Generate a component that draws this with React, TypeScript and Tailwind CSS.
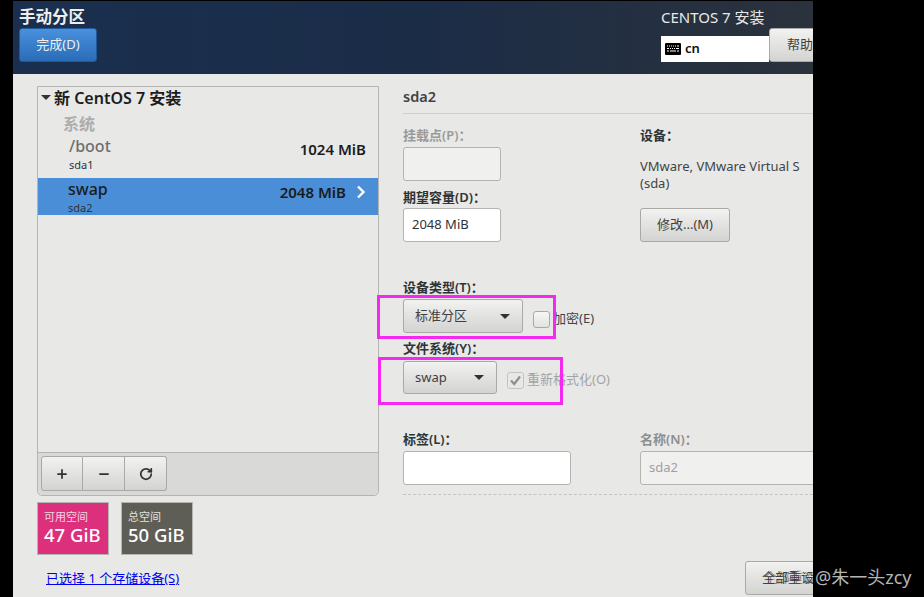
import { Plus, Minus, RotateCw } from "lucide-react"

const font = "font-['Noto_Sans','Noto_Sans_CJK_SC',sans-serif]"
const btn =
    "flex items-center rounded-[3px] border border-[#a9a9a6] bg-gradient-to-b from-[#f2f2f1] to-[#d3d3d1] text-[#3f3f3f]"
const label = "text-[13px] leading-[16px] font-semibold whitespace-nowrap"

function Caret() {
    return <span className="w-0 h-0 border-x-[5px] border-x-transparent border-t-[5px] border-t-[#2e3436]" />
}

function Keyboard() {
    return (
        <svg width="16" height="12" viewBox="0 0 16 12" className="shrink-0">
            <rect width="16" height="12" rx="1" fill="#000" />
            <path d="M2 3h1M4 3h1M6 3h1M8 3h1M10 3h1M12 3h2M2 5.500h2M5 5.500h1M7 5.500h1M9 5.500h1M11 5.500h3M2 8h2M5 8h6M12 8h2" stroke="#fff" strokeWidth="1" />
        </svg>
    )
}

function PartRow({ name, dev, size, selected }: { name: string; dev: string; size: string; selected?: boolean }) {
    return (
        <div className={selected ? "h-[37px] bg-[#4a8ed8] flex pl-[30px] pr-[12px]" : "h-[37px] flex pl-[31px] pr-[12px]"}>
            <div className="flex-1 flex flex-col">
                <span className={selected ? "text-[16px] leading-[22px] font-medium text-[#1c1c1c]" : "text-[16px] leading-[22px] font-medium text-[#6e6e6e]"}>{name}</span>
                <span className="text-[11px] leading-[13px] mt-[1px] text-[#2e3436]">{dev}</span>
            </div>
            <span className="text-[15px] font-semibold text-[#1c1c1c] mt-[6px] leading-[17px]">{size}</span>
            {selected ? (
                <svg width="10" height="14" viewBox="0 0 10 14" className="ml-[10px] mt-[7px]">
                    <path d="M2 1.500 7.500 7 2 12.500" fill="none" stroke="#fff" strokeWidth="2.400" />
                </svg>
            ) : null}
        </div>
    )
}

export default function App() {
    return (
        <div className={`relative w-[924px] h-[597px] bg-black overflow-hidden pl-[13px] pt-px ${font}`}>
            <div className="w-[800px] h-[596px] bg-[#e8e8e7] flex flex-col overflow-hidden">
                {/* Header */}
                <header className="h-[73px] shrink-0 flex justify-between bg-gradient-to-r from-[#1a2f4f] via-[#1b2c47] to-[#2a323c]">
                    <div className="pl-[6px] pt-[6px]">
                        <h1 className="text-[16.500px] leading-[20px] font-semibold text-[#eeeeec]">手动分区</h1>
                        <button className="mt-[1px] w-[78px] h-[34px] rounded-[3px] border border-[#1f5a9c] bg-gradient-to-b from-[#4a90dc] to-[#2a6cb8] text-[13px] text-[#eeeeec]">
                            完成(D)
                        </button>
                    </div>
                    <div className="w-[152px] shrink-0 pt-[7px]">
                        <div className="text-[15px] leading-[18px] text-[#e8e8e8] whitespace-nowrap">CENTOS 7 安装</div>
                        <div className="flex items-start">
                            <div className="mt-[10px] w-[108px] h-[26px] shrink-0 bg-white flex items-center gap-[4px] pl-[4px]">
                                <Keyboard />
                                <span className="text-[13px] font-semibold text-[#111]">cn</span>
                            </div>
                            <button className={`${btn} mt-[2px] w-[60px] h-[34px] text-[13px] shrink-0 pl-[17px] whitespace-nowrap`}>帮助(H)</button>
                        </div>
                    </div>
                </header>

                <div className="flex-1 flex pl-[24px] pt-[12px] min-h-0">
                    {/* Left column */}
                    <div className="w-[342px] shrink-0">
                        <div className="h-[410px] border border-[#b4b4b2] rounded-b-[5px] flex flex-col">
                            <div className="flex-1">
                                <div className="flex items-center h-[21px] pl-[3px] gap-[3px] text-[16px] font-semibold text-[#1c1c1c]">
                                    <Caret />
                                    新 CentOS 7 安装
                                </div>
                                <div className="pl-[25px] text-[16px] leading-[20px] mt-[6px] font-semibold text-[#adadad]">系统</div>
                                <div className="mt-[1px] mb-[6px]"><PartRow name="/boot" dev="sda1" size="1024 MiB" /></div>
                                <PartRow name="swap" dev="sda2" size="2048 MiB" selected />
                            </div>
                            <div className="h-[43px] border-t border-[#b4b4b2] bg-[#d9d9d7] rounded-b-[5px] pl-[3px] pt-[3px]">
                                <div className="flex w-[126px] h-[35px]">
                                    <button className={`${btn} justify-center w-[42px] rounded-r-none`}><Plus size={14} strokeWidth={3} color="#2e3436" /></button>
                                    <button className={`${btn} justify-center w-[42px] rounded-none border-l-0`}><Minus size={14} strokeWidth={3} color="#2e3436" /></button>
                                    <button className={`${btn} justify-center w-[42px] rounded-l-none border-l-0`}><RotateCw size={14} strokeWidth={3} color="#2e3436" /></button>
                                </div>
                            </div>
                        </div>
                        <div className="flex gap-[12px] mt-[6px]">
                            <div className="w-[72px] h-[53px] border border-[#b4b4b2] bg-[#dc307c] text-white pl-[6px] pt-[7px]">
                                <div className="text-[11px] leading-[14px] text-[#f5d5e3]">可用空间</div>
                                <div className="text-[18.500px] leading-[22px] font-medium whitespace-nowrap">47 GiB</div>
                            </div>
                            <div className="w-[72px] h-[53px] border border-[#b4b4b2] bg-[#5e5e56] text-white pl-[6px] pt-[7px]">
                                <div className="text-[11px] leading-[14px] text-[#e2e2de]">总空间</div>
                                <div className="text-[18.500px] leading-[22px] font-medium whitespace-nowrap">50 GiB</div>
                            </div>
                        </div>
                        <a className="block ml-[9px] mt-[15px] text-[13px] leading-[16px] text-[#0000ee] underline whitespace-nowrap">已选择 1 个存储设备(S)</a>
                    </div>

                    {/* Right column */}
                    <div className="ml-[24px] flex-1 min-w-0">
                        <div className="h-[28px] border-b border-[#d0d0ce] text-[14.500px] font-semibold leading-[21px] text-[#3f4446]">sda2</div>
                        <div className="flex mt-[13px]">
                            <div className="w-[237px] shrink-0">
                                <div className={`${label} text-[#9a9a9a]`}>挂载点(P)：</div>
                                <div className="mt-[4px] w-[98px] h-[34px] border border-[#b4b4b2] rounded-[3px] bg-[#f0f0ef]" />
                                <div className={`${label} mt-[8px] text-[#2e3436]`}>期望容量(D)：</div>
                                <div className="mt-[3px] w-[98px] h-[34px] border border-[#b4b4b2] rounded-[3px] bg-white text-[13px] leading-[30px] pl-[8px] text-[#2e3436]">2048 MiB</div>
                            </div>
                            <div className="flex-1">
                                <div className={`${label} text-[#2e3436]`}>设备：</div>
                                <div className="mt-[15px] text-[13px] leading-[17px] text-[#3f4446] whitespace-nowrap">VMware, VMware Virtual S<br />(sda)</div>
                                <button className={`${btn} justify-center mt-[16px] w-[90px] h-[34px] text-[13px]`}>修改...(M)</button>
                            </div>
                        </div>

                        <div className={`${label} mt-[37px] text-[#2e3436]`}>设备类型(T)：</div>
                        <div className="flex items-center mt-[4px]">
                            <button className={`${btn} justify-between w-[120px] h-[34px] text-[13px] pl-[11px] pr-[12px]`}>标准分区<Caret /></button>
                            <span className="ml-[10px] w-[17px] h-[17px] rounded-[3px] border border-[#a9a9a6] bg-gradient-to-b from-[#f7f7f6] to-[#e2e2e0] mt-[6px]" />
                            <span className="ml-[3px] text-[13px] text-[#3f4446] mt-[6px]">加密(E)</span>
                        </div>
                        <div className={`${label} mt-[7px] text-[#2e3436]`}>文件系统(Y)：</div>
                        <div className="flex items-center mt-[5px]">
                            <button className={`${btn} justify-between w-[94px] h-[33px] text-[13px] pl-[11px] pr-[12px]`}>swap<Caret /></button>
                            <span className="ml-[10px] w-[17px] h-[17px] rounded-[3px] border border-[#c4c4c2] bg-[#e8e8e7] flex items-center justify-center mt-[5px]">
                                <svg width="13" height="13" viewBox="0 0 13 13"><path d="M2 6.500 5.200 10 11 2.500" fill="none" stroke="#8f8f8f" strokeWidth="2.200" /></svg>
                            </span>
                            <span className="ml-[3px] text-[13px] text-[#a3a3a3] mt-[5px]">重新格式化(O)</span>
                        </div>

                        <div className="flex mt-[37px]">
                            <div className="w-[237px] shrink-0">
                                <div className={`${label} text-[#2e3436]`}>标签(L)：</div>
                                <div className="mt-[4px] w-[168px] h-[34px] border border-[#b4b4b2] rounded-[3px] bg-white" />
                            </div>
                            <div className="flex-1">
                                <div className={`${label} text-[#8e8e8e]`}>名称(N)：</div>
                                <div className="mt-[4px] w-[200px] h-[34px] border border-[#b4b4b2] rounded-[3px] bg-[#f0f0ef] text-[13px] leading-[30px] pl-[8px] text-[#a0a0a0]">sda2</div>
                            </div>
                        </div>
                        <div className="mt-[9px] border-t border-dashed border-[#c4c4c2]" />
                        <div className="flex mt-[66px] ml-[342px]">
                            <button className={`${btn} w-[90px] h-[34px] text-[13px] shrink-0 pl-[16px] whitespace-nowrap [text-shadow:2px_0_0_rgba(60,60,60,0.6)]`}>全部重设(L)</button>
                        </div>
                    </div>
                </div>
            </div>

            {/* Annotation boxes and watermark drawn over the screenshot */}
            <div className="absolute left-[377px] top-[295px] w-[179px] h-[44px] border-[3px] border-[#f528ef]" />
            <div className="absolute left-[378px] top-[357px] w-[185px] h-[48px] border-[3px] border-[#f528ef]" />
            <div className="absolute left-[815px] top-[565px] text-[18px] leading-[24px] text-[#b4b4b4] whitespace-nowrap">@朱一头zcy</div>
        </div>
    )
}
